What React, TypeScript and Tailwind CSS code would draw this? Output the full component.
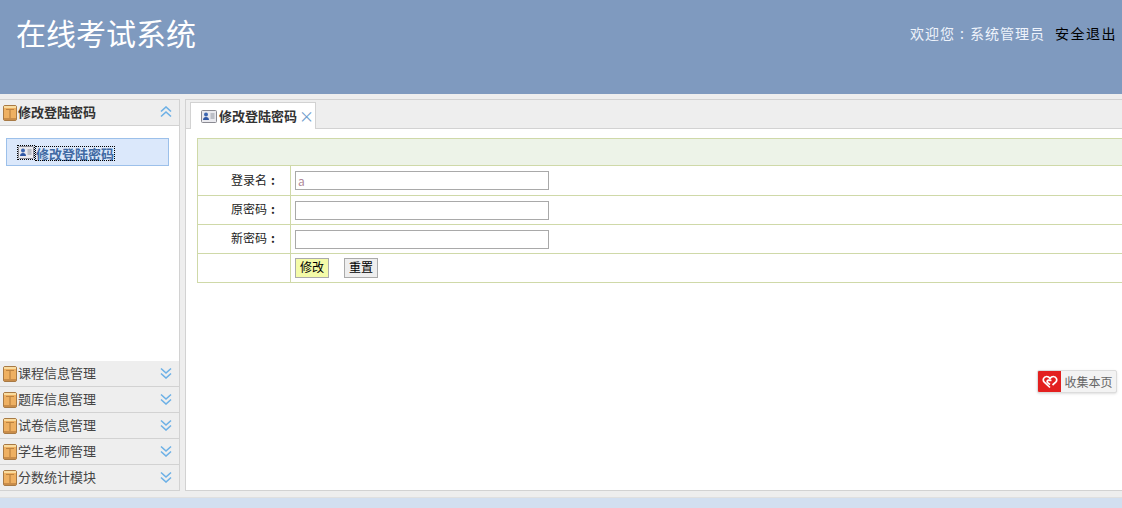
const font = "font-['Noto_Sans_CJK_SC','Liberation_Sans',sans-serif]";

function BoxIcon() {
  return (
    <svg width="14" height="16" viewBox="0 0 14 16" className="shrink-0">
      <rect x="0.5" y="0.5" width="13" height="15" rx="1.5" fill="#eeb062" stroke="#a87a45" />
      <rect x="1" y="1" width="12" height="2" fill="#f9dca0" />
      <path d="M3 4.500h8M7 4.500v8.500" stroke="#bd8340" strokeWidth="1.200" fill="none" />
      <rect x="1" y="13" width="12" height="2" fill="#c98d4a" />
    </svg>
  );
}

function CardIcon() {
  return (
    <svg width="16" height="13" viewBox="0 0 16 13" className="shrink-0">
      <rect x="0.5" y="0.5" width="15" height="12" rx="1" fill="#e9e9ee" stroke="#8a8a92" />
      <circle cx="5" cy="4.500" r="2" fill="#3c66b0" />
      <path d="M2 10c0-2 1.200-3 3-3s3 1 3 3z" fill="#2f56a3" />
      <path d="M9.500 4h4M9.500 6h4M9.500 8h4" stroke="#8e939e" />
    </svg>
  );
}

function Chevrons({ up }: { up?: boolean }) {
  return (
    <svg width="12" height="12" viewBox="0 0 12 12" className="mb-[1px] shrink-0" fill="none" stroke="#6cb0e6" strokeWidth="1.600">
      {up ? (
        <>
          <path d="M1 5.500 6 1l5 4.500" />
          <path d="M1 10.500 6 6l5 4.500" />
        </>
      ) : (
        <>
          <path d="M1 1.500 6 6l5-4.500" />
          <path d="M1 6.500 6 11l5-4.500" />
        </>
      )}
    </svg>
  );
}

function AccordionRow({ title }: { title: string }) {
  return (
    <div className="flex h-[26px] items-center border-b border-[#d2d2d2] bg-[#eeeeee] pl-[3px] pr-[7px]">
      <BoxIcon />
      <span className="mb-[2px] ml-[1px] flex-1 text-[13px] leading-none text-[#444]">{title}</span>
      <Chevrons />
    </div>
  );
}

function FormRow({ label, value, tall }: { label: string; value?: string; tall?: boolean }) {
  return (
    <div className={tall ? "flex h-[30px] border-t border-[#cfd9a8]" : "flex h-[29px] border-t border-[#cfd9a8]"}>
      <div className="flex w-[93px] items-center justify-end border-r border-[#cfd9a8] pb-[2px] pr-[11px] text-[12px] text-[#222]">
        {label}
        <span className="inline-block w-[12px] text-center font-bold">:</span>
      </div>
      <div className="flex items-center pl-1">
        <div className="flex h-[19px] w-[254px] items-center border border-[#a9a9a9] bg-white pl-[2px] text-[12px] text-[#b08a9a]">
          {value}
        </div>
      </div>
    </div>
  );
}

export default function App() {
  const rows = ["课程信息管理", "题库信息管理", "试卷信息管理", "学生老师管理", "分数统计模块"];

  return (
    <div className={`${font} flex h-[508px] w-[1122px] flex-col overflow-hidden bg-[#eeeeee]`}>
      <header className="flex h-[94px] shrink-0 items-start justify-between bg-[#7f9abf] pl-4 pr-[5px]">
        <h1 className="mt-[11px] text-[30px] font-normal leading-[43px] text-white">在线考试系统</h1>
        <div className="mt-[23px] flex text-[14px] leading-[20px] tracking-[1px]">
          <span className="text-[#eef3fb]">
            欢迎您<span className="inline-block w-[15px] text-center">:</span>系统管理员
          </span>
          <span className="ml-[10px] tracking-[1.500px] text-black">安全退出</span>
        </div>
      </header>

      <div className="flex h-[403px] shrink-0 gap-[5px] pt-[5px]">
        <aside className="flex h-[392px] w-[180px] shrink-0 flex-col border-r border-t border-[#d2d2d2]">
          <div className="flex h-[26px] shrink-0 items-center border-b border-[#d2d2d2] pl-[3px] pr-[7px]">
            <BoxIcon />
            <span className="mb-[2px] ml-[1px] flex-1 text-[13px] font-bold leading-none text-[#333]">修改登陆密码</span>
            <Chevrons up />
          </div>
          <div className="flex-1 bg-white px-[6px] pt-[12px]">
            <div className="flex h-[28px] w-[163px] items-center border border-[#9cc0ea] bg-[#dbe8fb] pl-[11px]">
              <span className="flex outline-1 outline-dotted outline-black">
                <CardIcon />
              </span>
              <span className="ml-[2px] mt-[2px] text-[13px] font-bold leading-none text-[#416aa3] outline-1 outline-dotted outline-black">
                修改登陆密码
              </span>
            </div>
          </div>
          {rows.map((r) => (
            <AccordionRow key={r} title={r} />
          ))}
        </aside>

        <main className="flex h-[392px] flex-1 flex-col border-b border-l border-t border-[#d2d2d2]">
          <div className="flex h-[29px] shrink-0 items-end border-b border-[#d2d2d2] pl-[4px]">
            <div className="-mb-px flex h-[27px] w-[126px] items-center border border-b-0 border-[#d2d2d2] bg-white pl-[10px]">
              <CardIcon />
              <span className="mb-[2px] ml-[2px] shrink-0 whitespace-nowrap text-[13px] font-bold leading-none text-[#333]">修改登陆密码</span>
              <span className="mb-[2px] ml-[2px] text-[15px] leading-none text-[#6c9ccc]">×</span>
            </div>
          </div>
          <div className="flex-1 bg-white pl-[11px] pt-[9px]">
            <div className="border-b border-l border-[#cfd9a8]">
              <div className="h-[27px] border-t border-[#cfd9a8] bg-[#edf3e8]" />
              <FormRow label="登录名" value="a" tall />
              <FormRow label="原密码" />
              <FormRow label="新密码" />
              <div className="flex h-[29px] border-t border-[#cfd9a8]">
                <div className="w-[93px] border-r border-[#cfd9a8]" />
                <div className="flex items-center gap-[15px] pl-1">
                  <button className="h-[20px] w-[34px] border border-[#aaa] bg-[#f4fba8] pb-[2px] text-[12px] leading-none text-black">修改</button>
                  <button className="h-[20px] w-[34px] border border-[#aaa] bg-[#eeeeee] pb-[2px] text-[12px] leading-none text-black">重置</button>
                </div>
              </div>
            </div>
            <div className="mt-[87px] flex justify-end pr-[5px]">
              <div className="flex h-[23px] w-[80px] overflow-hidden rounded-[2px] border border-[#dcdcdc] bg-[#f3f3f3] shadow-sm">
                <div className="flex w-[23px] items-center justify-center bg-[#e3201f]">
                  <svg width="16" height="14" viewBox="0 0 16 14" fill="none" stroke="#fff" strokeWidth="1.700">
                    <path d="M8 12.500 2.300 7.200C.2 5 1.700 1.500 4.600 1.500 6.300 1.500 7.400 2.500 8 3.500c.6-1 1.700-2 3.400-2 2.900 0 4.400 3.500 2.300 5.700L10.500 10" />
                    <path d="M9.500 5.500 6.500 5.200C5 5.200 4.500 7 6 8l2 1.500" />
                  </svg>
                </div>
                <span className="flex-1 text-center text-[12px] leading-[21px] text-[#666]">收集本页</span>
              </div>
            </div>
          </div>
        </main>
      </div>

      <footer className="flex-1 border-t border-[#e0e0e0] bg-[#d2dff0]" />
    </div>
  );
}
